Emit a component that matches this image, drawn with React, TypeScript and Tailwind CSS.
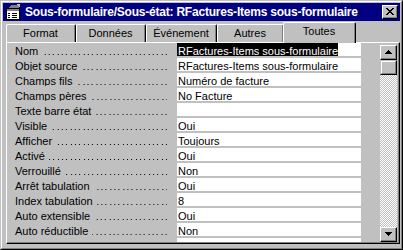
const rows: [string, string][] = [
  ['Nom', 'RFactures-Items sous-formulaire'],
  ['Objet source', 'RFactures-Items sous-formulaire'],
  ['Champs fils', 'Numéro de facture'],
  ['Champs pères', 'No Facture'],
  ['Texte barre état', ''],
  ['Visible', 'Oui'],
  ['Afficher', 'Toujours'],
  ['Activé', 'Oui'],
  ['Verrouillé', 'Non'],
  ['Arrêt tabulation', 'Oui'],
  ['Index tabulation', '8'],
  ['Auto extensible', 'Oui'],
  ['Auto réductible', 'Non'],
  ['', ''],
];

const tabs = [
  { label: 'Format', w: 'w-[70px]' },
  { label: 'Données', w: 'w-[70px]' },
  { label: 'Événement', w: 'w-[71px]' },
  { label: 'Autres', w: 'w-[67px]' },
];

const FormIcon = () => (
  <svg width="16" height="16" viewBox="0 0 16 16" shapeRendering="crispEdges">
    <rect x="1" y="4" width="13" height="11" fill="#fff" stroke="#000" />
    <rect x="2" y="5" width="12" height="2" fill="#808080" />
    <path d="M3 9h2M7 9h5M3 11h2M7 11h5M3 13h2M7 13h5" stroke="#000" />
    <path d="M6 1h8v3H4z" fill="#808080" />
    <path d="M11 0l4 0 0 4z" fill="#c0c0c0" />
  </svg>
);

const Arrow = ({ down }: { down?: boolean }) => (
  <svg width="7" height="4" viewBox="0 0 7 4" shapeRendering="crispEdges">
    {down ? <path d="M0 0h7L3.5 4z" fill="#000" /> : <path d="M0 4h7L3.5 0z" fill="#000" />}
  </svg>
);

const ScrollButton = ({ down }: { down?: boolean }) => (
  <div className="w-[17px] h-[15px] border border-t-white border-l-white border-r-black border-b-black bg-[#c0c0c0]">
    <div className="w-full h-full border-r border-b border-[#808080] flex items-center justify-center">
      <Arrow down={down} />
    </div>
  </div>
);

export default function App() {
  return (
    <div className="w-[403px] h-[250px] overflow-hidden bg-[#c0c0c0] font-['Liberation_Sans',sans-serif] text-[11px] text-black">
      <div className="w-full h-full border border-t-[#c0c0c0] border-l-[#c0c0c0] border-r-black border-b-black">
        <div className="w-full h-full border border-t-white border-l-white border-r-[#808080] border-b-[#808080] p-px flex flex-col">
          {/* title bar */}
          <div className="h-[18px] bg-[#000080] flex items-center pl-[2px] pr-[2px] shrink-0">
            <FormIcon />
            <span className="ml-[4px] text-white font-bold text-[12px] tracking-[-0.22px] leading-none whitespace-nowrap">
              Sous-formulaire/Sous-état: RFactures-Items sous-formulaire
            </span>
            <div className="ml-auto w-[16px] h-[14px] border border-t-white border-l-white border-r-black border-b-black bg-[#c0c0c0]">
              <div className="w-full h-full border-r border-b border-[#808080] flex items-center justify-center">
                <svg width="8" height="7" viewBox="0 0 8 7" shapeRendering="crispEdges">
                  <path d="M0 0h2v1h1v1h2V1h1V0h2v1H7v1H6v1H5v1h1v1h1v1h1v1H6V6H5V5H3v1H2v1H0V6h1V5h1V4h1V3H2V2H1V1H0z" fill="#000" />
                </svg>
              </div>
            </div>
          </div>

          {/* tabs */}
          <div className="h-[21px] flex items-end pl-[3px] shrink-0 relative z-10">
            {tabs.map((t) => (
              <div
                key={t.label}
                className={`h-[18px] border-l border-t border-white rounded-tl-[2px] rounded-tr-[2px] border-r border-r-black flex ${t.w}`}
              >
                <div className="flex-1 border-r border-[#808080] flex items-start justify-center pt-[2px] leading-[13px]">
                  {t.label}
                </div>
              </div>
            ))}
            <div className="h-[21px] w-[73px] -ml-[1px] border-l border-t border-white rounded-tl-[2px] rounded-tr-[2px] border-r border-r-black flex bg-[#c0c0c0] -mb-px">
              <div className="flex-1 border-r border-[#808080] flex items-start justify-center pt-[2px] leading-[13px]">
                Toutes
              </div>
            </div>
          </div>

          {/* panel */}
          <div className="flex-1 ml-[3px] border border-t-white border-l-white border-r-black border-b-black min-h-0">
            <div className="h-full border-r border-b border-[#808080] flex min-h-0 overflow-hidden">
              <div className="w-[354px] flex flex-col overflow-hidden">
                {rows.map(([label, value], i) => (
                  <div key={i} className="h-[15px] shrink-0 flex">
                    <div className="w-[170px] h-[13px] flex items-start pl-[8px] whitespace-nowrap overflow-hidden">
                      {label && (
                        <>
                          <span className="mt-[2px] leading-[13px]">{label}</span>
                          <div className="flex-1 h-px mt-[11px] ml-[4px] mr-[10px] bg-[linear-gradient(to_right,transparent_0_3px,#000_3px_4px,transparent_4px_8px,#000_8px_9px,transparent_9px_12px,#000_12px_13px)] bg-[length:13px_1px] bg-repeat-x bg-right" />
                        </>
                      )}
                    </div>
                    <div className="flex-1 h-[13px] bg-white flex items-start whitespace-nowrap overflow-hidden">
                      <span
                        className={
                          i === 0
                            ? 'bg-black text-white pl-[1px] h-[13px] pt-[2px] leading-[13px]'
                            : 'pl-[1px] pt-[2px] leading-[13px]'
                        }
                      >
                        {value}
                      </span>
                    </div>
                  </div>
                ))}
              </div>
              <div className="flex-1" />
              {/* scrollbar */}
              <div className="w-[17px] mr-[1px] mt-[2px] flex flex-col">
                <ScrollButton />
                <div className="w-[17px] h-[15px] border border-t-[#c0c0c0] border-l-[#c0c0c0] border-r-black border-b-black">
                  <div className="w-full h-full border border-t-white border-l-white border-r-[#808080] border-b-[#808080] bg-[#c0c0c0]" />
                </div>
                <div className="flex-1 bg-[repeating-conic-gradient(#ffffff_0_25%,#c0c0c0_0_50%)] bg-[length:2px_2px]" />
                <ScrollButton down />
              </div>
            </div>
          </div>
          <div className="h-[3px] shrink-0" />
        </div>
      </div>
    </div>
  );
}
